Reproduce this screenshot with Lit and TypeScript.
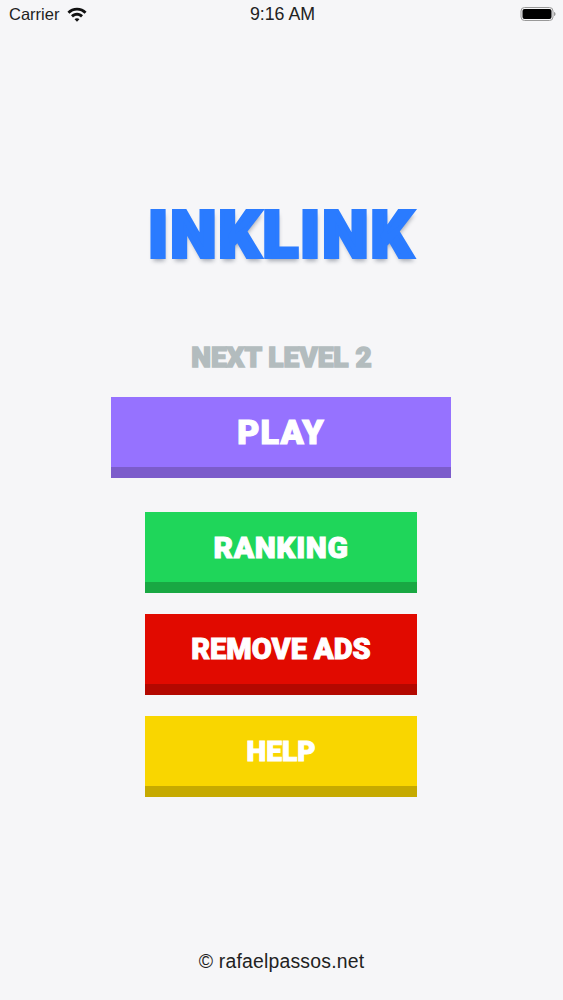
import { LitElement, html, css } from "lit";
import { customElement } from "lit/decorators.js";

@customElement("app-root")
export class AppRoot extends LitElement {
  static styles = css`
    :host { display: block; width: 563px; height: 1000px; background: #f6f6f8; font-family: "Liberation Sans", Arial, sans-serif; overflow: hidden; }
    .page { display: flex; flex-direction: column; align-items: center; height: 1000px; }
    .status { align-self: stretch; height: 28px; display: grid; grid-template-columns: 1fr auto 1fr; align-items: center; padding: 0 7px 0 9px; font-size: 16.500px; color: #222; box-sizing: border-box; }
    .left { display: flex; align-items: center; gap: 8px; }
    .time { font-size: 17.800px; }
    .right { display: flex; justify-content: flex-end; }
    .heavy { font-family: "Roboto", "Liberation Sans", sans-serif; font-weight: 900; line-height: 1; white-space: nowrap; }
    .title { margin-top: 172px; height: 70px; display: flex; align-items: center; font-size: 65px; color: #2a7bff; -webkit-text-stroke: 4px #2a7bff; letter-spacing: 2.500px; text-shadow: 1px 4px 4px rgba(40, 50, 70, 0.4); }
    .next { margin-top: 73px; height: 30px; display: flex; align-items: center; font-size: 28px; color: #b3bcbe; -webkit-text-stroke: 1.500px #b3bcbe; }
    .btn { margin-top: 21px; margin-right: 1px; width: 272px; height: 81px; display: flex; flex-direction: column; }
    .face { flex: 1; display: flex; align-items: center; justify-content: center; padding-top: 1px; box-sizing: border-box; color: #fff; font-size: 30px; -webkit-text-stroke: 1px #fff; }
    .lip { height: 11px; }
    .play { width: 340px; margin-top: 24px; }
    .play .face { background: #9672ff; font-size: 34px; padding-top: 0; letter-spacing: 1.200px; -webkit-text-stroke: 1.200px #fff; }
    .play .lip { background: #7c5ccb; }
    .ranking { margin-top: 34px; }
    .ranking .face { background: #1fd65a; letter-spacing: 0.600px; }
    .ranking .lip { background: #19a843; }
    .remove .face { background: #e10a00; font-size: 29px; }
    .remove .lip { background: #b30800; }
    .help .face { background: #f9d600; font-size: 28px; }
    .help .lip { background: #c6aa00; }
    .spacer { flex: 1; }
    .footer { height: 24px; margin-bottom: 27px; display: flex; align-items: center; font-size: 19.400px; letter-spacing: 0.200px; color: #222; }
  `;

  render() {
    return html`
      <div class="page">
        <div class="status">
          <div class="left">
            <span>Carrier</span>
            <svg width="20" height="15" viewBox="0 0 18 13"><path fill="#111" d="M9 .5C5.600.5 2.600 1.800.4 4l1.800 1.900C4 4.100 6.400 3 9 3s5 1.100 6.800 2.900L17.600 4C15.400 1.800 12.400.5 9 .5zM9 5c-2.100 0-4 .8-5.400 2.200l1.800 1.900C6.300 8.100 7.600 7.600 9 7.600s2.700.5 3.600 1.500l1.800-1.900C13 5.800 11.100 5 9 5zm0 4.800c-.9 0-1.600.3-2.200.9L9 13l2.200-2.300c-.6-.6-1.300-.9-2.200-.9z"/></svg>
          </div>
          <div class="time">9:16 AM</div>
          <div class="right">
            <svg width="36" height="16" viewBox="0 0 36 16"><rect x="1" y="1.500" width="32" height="13" rx="3.500" fill="none" stroke="#999" stroke-width="1"/><rect x="2.500" y="3" width="29" height="10" rx="2" fill="#000"/><path d="M34 6v4c1-.3 1.500-1 1.500-2s-.5-1.700-1.500-2z" fill="#999"/></svg>
          </div>
        </div>
        <div class="title heavy">INKLINK</div>
        <div class="next heavy">NEXT LEVEL 2</div>
        <div class="btn play"><div class="face heavy">PLAY</div><div class="lip"></div></div>
        <div class="btn ranking"><div class="face heavy">RANKING</div><div class="lip"></div></div>
        <div class="btn remove"><div class="face heavy">REMOVE ADS</div><div class="lip"></div></div>
        <div class="btn help"><div class="face heavy">HELP</div><div class="lip"></div></div>
        <div class="spacer"></div>
        <div class="footer">© rafaelpassos.net</div>
      </div>
    `;
  }
}
